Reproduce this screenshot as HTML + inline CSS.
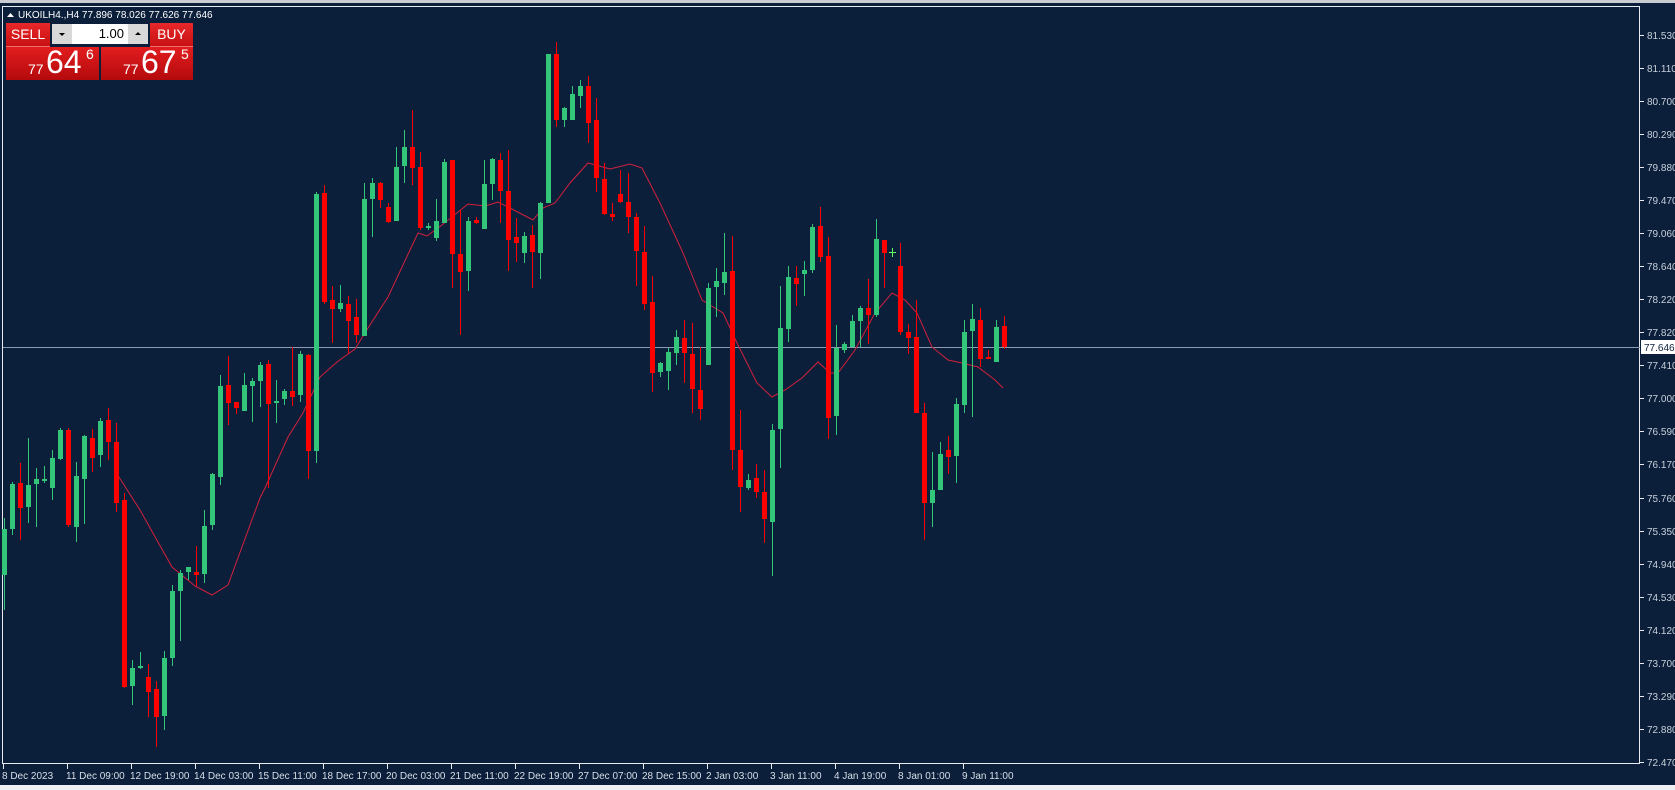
<!DOCTYPE html>
<html><head><meta charset="utf-8"><style>
html,body{margin:0;padding:0;width:1675px;height:790px;overflow:hidden;background:#0b1f3b;font-family:"Liberation Sans",sans-serif}
.abs{position:absolute}
.btn{position:absolute;color:#fff;font-size:14px;text-align:center;background:linear-gradient(#e8282a,#c81012);}
.pb{position:absolute;background:linear-gradient(#e21d1f,#b40a0c);color:#fff;}
</style></head><body>
<svg class="abs" style="left:0;top:0" width="1675" height="790" xmlns="http://www.w3.org/2000/svg">
<rect x="0" y="0" width="1675" height="790" fill="#0b1f3b"/>
<rect x="0" y="0" width="1675" height="3" fill="#c9ccd1"/>
<rect x="0" y="785" width="1675" height="5" fill="#eef0f3"/>
<rect x="2.5" y="6.5" width="1637" height="757" fill="none" stroke="#e8ecf0" stroke-width="1"/>
<line x1="3" y1="347.5" x2="1640" y2="347.5" stroke="#8d9bb0" stroke-width="1"/>
<polyline fill="none" stroke="#d2203c" stroke-width="1" points="117,474 140,510 172,567 195,586 212,595 228,585 260,498 265,488 288,437 303,413 320,377 337,362 355,349 368,328 388,297 418,233 427,236 442,225 468,204 485,206 498,202 510,208 533,220 543,208 555,203 570,183 588,163 610,169 630,164 642,168 660,203 683,253 702,300 710,305 723,313 737,343 757,383 772,397 785,390 802,378 818,362 830,373 838,373 855,350 875,313 892,293 905,300 917,313 932,347 948,360 962,363 978,367 995,380 1003,388"/>
<g fill="#c8d0da" font-size="10" font-family="Liberation Sans,sans-serif">
<text x="1647" y="39">81.530</text><text x="1647" y="72">81.110</text><text x="1647" y="105">80.700</text><text x="1647" y="138">80.290</text><text x="1647" y="171">79.880</text><text x="1647" y="204">79.470</text><text x="1647" y="237">79.060</text><text x="1647" y="270">78.640</text><text x="1647" y="303">78.220</text><text x="1647" y="336">77.820</text><text x="1647" y="369">77.410</text><text x="1647" y="402">77.000</text><text x="1647" y="435">76.590</text><text x="1647" y="468">76.170</text><text x="1647" y="502">75.760</text><text x="1647" y="535">75.350</text><text x="1647" y="568">74.940</text><text x="1647" y="601">74.530</text><text x="1647" y="634">74.120</text><text x="1647" y="667">73.700</text><text x="1647" y="700">73.290</text><text x="1647" y="733">72.880</text><text x="1647" y="766">72.470</text>
</g>
<g stroke="#e8ecf0" stroke-width="1">
<path d="M1640 35.5h4M1640 68.5h4M1640 101.5h4M1640 134.5h4M1640 167.5h4M1640 200.5h4M1640 233.5h4M1640 266.5h4M1640 299.5h4M1640 332.5h4M1640 365.5h4M1640 398.5h4M1640 431.5h4M1640 464.5h4M1640 498.5h4M1640 531.5h4M1640 564.5h4M1640 597.5h4M1640 630.5h4M1640 663.5h4M1640 696.5h4M1640 729.5h4M1640 762.5h4"/>
<path d="M3.5 764v5M67.5 764v5M131.5 764v5M195.5 764v5M259.5 764v5M323.5 764v5M387.5 764v5M451.5 764v5M515.5 764v5M579.5 764v5M643.5 764v5M707.5 764v5M771.5 764v5M835.5 764v5M899.5 764v5M963.5 764v5"/>
</g>
<rect x="1641" y="340" width="34" height="14" fill="#ffffff"/>
<text x="1644" y="351" font-size="10" fill="#0b1f3b" font-family="Liberation Sans,sans-serif">77.646</text>
<g fill="#d8dee6" font-size="10" font-family="Liberation Sans,sans-serif">
<text x="2" y="779">8 Dec 2023</text><text x="66" y="779">11 Dec 09:00</text><text x="130" y="779">12 Dec 19:00</text><text x="194" y="779">14 Dec 03:00</text><text x="258" y="779">15 Dec 11:00</text><text x="322" y="779">18 Dec 17:00</text><text x="386" y="779">20 Dec 03:00</text><text x="450" y="779">21 Dec 11:00</text><text x="514" y="779">22 Dec 19:00</text><text x="578" y="779">27 Dec 07:00</text><text x="642" y="779">28 Dec 15:00</text><text x="706" y="779">2 Jan 03:00</text><text x="770" y="779">3 Jan 11:00</text><text x="834" y="779">4 Jan 19:00</text><text x="898" y="779">8 Jan 01:00</text><text x="962" y="779">9 Jan 11:00</text>
</g>
<text x="18" y="18" font-size="10" fill="#ffffff" font-family="Liberation Sans,sans-serif">UKOILH4.,H4  77.896 78.026 77.626 77.646</text>
<path d="M7 17l3.5-4 3.5 4z" fill="#fff"/>
</svg>
<svg class="abs" style="left:0;top:0" width="1675" height="790" xmlns="http://www.w3.org/2000/svg">
<g fill="#33c57a">
<rect x="4" y="518" width="1" height="92"/><rect x="2" y="529" width="5" height="46"/>
<rect x="12" y="482" width="1" height="53"/><rect x="10" y="484" width="5" height="45"/>
<rect x="28" y="438" width="1" height="85"/><rect x="26" y="485" width="5" height="22"/>
<rect x="36" y="468" width="1" height="59"/><rect x="34" y="479" width="5" height="5"/>
<rect x="44" y="466" width="1" height="17"/><rect x="42" y="479" width="5" height="2"/>
<rect x="52" y="450" width="1" height="50"/><rect x="50" y="458" width="5" height="30"/>
<rect x="60" y="428" width="1" height="32"/><rect x="58" y="430" width="5" height="29"/>
<rect x="76" y="462" width="1" height="80"/><rect x="74" y="476" width="5" height="51"/>
<rect x="84" y="435" width="1" height="89"/><rect x="82" y="436" width="5" height="43"/>
<rect x="100" y="418" width="1" height="49"/><rect x="98" y="421" width="5" height="34"/>
<rect x="132" y="660" width="1" height="45"/><rect x="130" y="668" width="5" height="18"/>
<rect x="140" y="652" width="1" height="17"/><rect x="138" y="666" width="5" height="2"/>
<rect x="164" y="651" width="1" height="79"/><rect x="162" y="658" width="5" height="58"/>
<rect x="172" y="585" width="1" height="81"/><rect x="170" y="591" width="5" height="67"/>
<rect x="180" y="570" width="1" height="71"/><rect x="178" y="573" width="5" height="18"/>
<rect x="188" y="567" width="1" height="13"/><rect x="186" y="567" width="5" height="5"/>
<rect x="204" y="510" width="1" height="73"/><rect x="202" y="526" width="5" height="48"/>
<rect x="212" y="473" width="1" height="57"/><rect x="210" y="474" width="5" height="51"/>
<rect x="220" y="375" width="1" height="110"/><rect x="218" y="386" width="5" height="91"/>
<rect x="244" y="373" width="1" height="38"/><rect x="242" y="385" width="5" height="26"/>
<rect x="252" y="378" width="1" height="44"/><rect x="250" y="381" width="5" height="5"/>
<rect x="260" y="362" width="1" height="45"/><rect x="258" y="365" width="5" height="16"/>
<rect x="276" y="380" width="1" height="43"/><rect x="274" y="401" width="5" height="2"/>
<rect x="284" y="389" width="1" height="16"/><rect x="282" y="391" width="5" height="8"/>
<rect x="300" y="351" width="1" height="51"/><rect x="298" y="354" width="5" height="41"/>
<rect x="316" y="192" width="1" height="271"/><rect x="314" y="194" width="5" height="257"/>
<rect x="340" y="285" width="1" height="27"/><rect x="338" y="303" width="5" height="6"/>
<rect x="364" y="183" width="1" height="153"/><rect x="362" y="199" width="5" height="137"/>
<rect x="372" y="178" width="1" height="59"/><rect x="370" y="183" width="5" height="16"/>
<rect x="396" y="147" width="1" height="74"/><rect x="394" y="167" width="5" height="54"/>
<rect x="404" y="130" width="1" height="53"/><rect x="402" y="147" width="5" height="19"/>
<rect x="428" y="223" width="1" height="7"/><rect x="426" y="226" width="5" height="2"/>
<rect x="436" y="199" width="1" height="42"/><rect x="434" y="221" width="5" height="17"/>
<rect x="444" y="159" width="1" height="64"/><rect x="442" y="162" width="5" height="61"/>
<rect x="468" y="217" width="1" height="74"/><rect x="466" y="221" width="5" height="50"/>
<rect x="484" y="160" width="1" height="69"/><rect x="482" y="184" width="5" height="45"/>
<rect x="492" y="158" width="1" height="42"/><rect x="490" y="159" width="5" height="25"/>
<rect x="524" y="232" width="1" height="31"/><rect x="522" y="236" width="5" height="17"/>
<rect x="540" y="202" width="1" height="77"/><rect x="538" y="203" width="5" height="50"/>
<rect x="548" y="54" width="1" height="149"/><rect x="546" y="54" width="5" height="149"/>
<rect x="564" y="107" width="1" height="20"/><rect x="562" y="108" width="5" height="12"/>
<rect x="572" y="86" width="1" height="34"/><rect x="570" y="94" width="5" height="26"/>
<rect x="580" y="80" width="1" height="28"/><rect x="578" y="86" width="5" height="10"/>
<rect x="660" y="362" width="1" height="15"/><rect x="658" y="363" width="5" height="9"/>
<rect x="668" y="348" width="1" height="42"/><rect x="666" y="352" width="5" height="19"/>
<rect x="676" y="330" width="1" height="35"/><rect x="674" y="337" width="5" height="16"/>
<rect x="708" y="283" width="1" height="82"/><rect x="706" y="288" width="5" height="77"/>
<rect x="716" y="268" width="1" height="49"/><rect x="714" y="281" width="5" height="6"/>
<rect x="724" y="233" width="1" height="62"/><rect x="722" y="272" width="5" height="11"/>
<rect x="748" y="474" width="1" height="16"/><rect x="746" y="480" width="5" height="8"/>
<rect x="772" y="424" width="1" height="152"/><rect x="770" y="430" width="5" height="92"/>
<rect x="780" y="286" width="1" height="182"/><rect x="778" y="328" width="5" height="101"/>
<rect x="788" y="266" width="1" height="76"/><rect x="786" y="277" width="5" height="52"/>
<rect x="804" y="261" width="1" height="35"/><rect x="802" y="270" width="5" height="4"/>
<rect x="812" y="224" width="1" height="49"/><rect x="810" y="227" width="5" height="43"/>
<rect x="836" y="325" width="1" height="110"/><rect x="834" y="348" width="5" height="68"/>
<rect x="844" y="342" width="1" height="11"/><rect x="842" y="344" width="5" height="6"/>
<rect x="852" y="315" width="1" height="32"/><rect x="850" y="321" width="5" height="26"/>
<rect x="860" y="306" width="1" height="41"/><rect x="858" y="308" width="5" height="13"/>
<rect x="876" y="219" width="1" height="98"/><rect x="874" y="239" width="5" height="76"/>
<rect x="932" y="452" width="1" height="75"/><rect x="930" y="490" width="5" height="13"/>
<rect x="940" y="442" width="1" height="48"/><rect x="938" y="454" width="5" height="36"/>
<rect x="956" y="398" width="1" height="85"/><rect x="954" y="404" width="5" height="52"/>
<rect x="964" y="320" width="1" height="93"/><rect x="962" y="332" width="5" height="73"/>
<rect x="972" y="304" width="1" height="113"/><rect x="970" y="319" width="5" height="12"/>
<rect x="996" y="320" width="1" height="42"/><rect x="994" y="327" width="5" height="35"/>
</g>
<g fill="#5cff5c"><rect x="892" y="248" width="1" height="9"/><rect x="889" y="252" width="7" height="1"/></g>
<g fill="#ff0000">
<rect x="20" y="463" width="1" height="77"/><rect x="18" y="483" width="5" height="25"/>
<rect x="68" y="428" width="1" height="99"/><rect x="66" y="430" width="5" height="95"/>
<rect x="92" y="429" width="1" height="43"/><rect x="90" y="438" width="5" height="20"/>
<rect x="108" y="408" width="1" height="52"/><rect x="106" y="420" width="5" height="22"/>
<rect x="116" y="423" width="1" height="89"/><rect x="114" y="442" width="5" height="61"/>
<rect x="124" y="493" width="1" height="195"/><rect x="122" y="500" width="5" height="187"/>
<rect x="148" y="664" width="1" height="53"/><rect x="146" y="677" width="5" height="15"/>
<rect x="156" y="681" width="1" height="66"/><rect x="154" y="689" width="5" height="28"/>
<rect x="196" y="546" width="1" height="40"/><rect x="194" y="572" width="5" height="3"/>
<rect x="228" y="356" width="1" height="69"/><rect x="226" y="385" width="5" height="18"/>
<rect x="236" y="402" width="1" height="12"/><rect x="234" y="402" width="5" height="6"/>
<rect x="268" y="360" width="1" height="128"/><rect x="266" y="364" width="5" height="40"/>
<rect x="292" y="347" width="1" height="59"/><rect x="290" y="391" width="5" height="6"/>
<rect x="308" y="354" width="1" height="125"/><rect x="306" y="355" width="5" height="96"/>
<rect x="324" y="185" width="1" height="119"/><rect x="322" y="193" width="5" height="109"/>
<rect x="332" y="286" width="1" height="57"/><rect x="330" y="300" width="5" height="9"/>
<rect x="348" y="296" width="1" height="57"/><rect x="346" y="304" width="5" height="17"/>
<rect x="356" y="299" width="1" height="44"/><rect x="354" y="317" width="5" height="18"/>
<rect x="380" y="182" width="1" height="26"/><rect x="378" y="183" width="5" height="17"/>
<rect x="388" y="203" width="1" height="20"/><rect x="386" y="207" width="5" height="15"/>
<rect x="412" y="110" width="1" height="75"/><rect x="410" y="147" width="5" height="21"/>
<rect x="420" y="152" width="1" height="78"/><rect x="418" y="167" width="5" height="61"/>
<rect x="452" y="160" width="1" height="128"/><rect x="450" y="160" width="5" height="94"/>
<rect x="460" y="210" width="1" height="125"/><rect x="458" y="254" width="5" height="18"/>
<rect x="476" y="217" width="1" height="7"/><rect x="474" y="220" width="5" height="3"/>
<rect x="500" y="153" width="1" height="70"/><rect x="498" y="160" width="5" height="31"/>
<rect x="508" y="150" width="1" height="121"/><rect x="506" y="191" width="5" height="49"/>
<rect x="516" y="218" width="1" height="44"/><rect x="514" y="237" width="5" height="6"/>
<rect x="532" y="225" width="1" height="63"/><rect x="530" y="235" width="5" height="17"/>
<rect x="556" y="42" width="1" height="85"/><rect x="554" y="54" width="5" height="66"/>
<rect x="588" y="76" width="1" height="67"/><rect x="586" y="86" width="5" height="37"/>
<rect x="596" y="98" width="1" height="94"/><rect x="594" y="120" width="5" height="58"/>
<rect x="604" y="163" width="1" height="52"/><rect x="602" y="179" width="5" height="35"/>
<rect x="612" y="203" width="1" height="18"/><rect x="610" y="214" width="5" height="3"/>
<rect x="620" y="170" width="1" height="33"/><rect x="618" y="194" width="5" height="8"/>
<rect x="628" y="173" width="1" height="60"/><rect x="626" y="202" width="5" height="15"/>
<rect x="636" y="213" width="1" height="73"/><rect x="634" y="217" width="5" height="34"/>
<rect x="644" y="226" width="1" height="84"/><rect x="642" y="252" width="5" height="52"/>
<rect x="652" y="276" width="1" height="116"/><rect x="650" y="302" width="5" height="71"/>
<rect x="684" y="320" width="1" height="63"/><rect x="682" y="338" width="5" height="15"/>
<rect x="692" y="323" width="1" height="90"/><rect x="690" y="354" width="5" height="35"/>
<rect x="700" y="347" width="1" height="73"/><rect x="698" y="390" width="5" height="19"/>
<rect x="732" y="236" width="1" height="234"/><rect x="730" y="271" width="5" height="179"/>
<rect x="740" y="410" width="1" height="102"/><rect x="738" y="450" width="5" height="37"/>
<rect x="756" y="464" width="1" height="34"/><rect x="754" y="478" width="5" height="14"/>
<rect x="764" y="470" width="1" height="73"/><rect x="762" y="492" width="5" height="27"/>
<rect x="796" y="266" width="1" height="40"/><rect x="794" y="278" width="5" height="6"/>
<rect x="820" y="207" width="1" height="55"/><rect x="818" y="226" width="5" height="31"/>
<rect x="828" y="237" width="1" height="202"/><rect x="826" y="256" width="5" height="162"/>
<rect x="868" y="279" width="1" height="65"/><rect x="866" y="308" width="5" height="7"/>
<rect x="884" y="240" width="1" height="48"/><rect x="882" y="240" width="5" height="13"/>
<rect x="900" y="243" width="1" height="92"/><rect x="898" y="266" width="5" height="66"/>
<rect x="908" y="324" width="1" height="30"/><rect x="906" y="332" width="5" height="6"/>
<rect x="916" y="300" width="1" height="113"/><rect x="914" y="337" width="5" height="76"/>
<rect x="924" y="403" width="1" height="137"/><rect x="922" y="413" width="5" height="90"/>
<rect x="948" y="436" width="1" height="38"/><rect x="946" y="450" width="5" height="7"/>
<rect x="980" y="308" width="1" height="59"/><rect x="978" y="320" width="5" height="39"/>
<rect x="988" y="350" width="1" height="9"/><rect x="986" y="357" width="5" height="2"/>
<rect x="1004" y="316" width="1" height="33"/><rect x="1002" y="326" width="5" height="21"/>
</g>
</svg>
<div class="abs" style="left:5px;top:22px;width:189px;height:59px;background:#0b1f3b"></div>
<div class="btn" style="left:6px;top:23px;width:44px;height:23px;line-height:22px;border-bottom:1px solid #f07070">SELL</div>
<div class="abs" style="left:52px;top:24px;width:20px;height:20px;background:#d9d9d9;"><div style="position:absolute;left:7px;top:9px;width:0;height:0;border-left:3px solid transparent;border-right:3px solid transparent;border-top:3px solid #000"></div></div>
<div class="abs" style="left:72px;top:24px;width:56px;height:20px;background:#fff;font-size:13px;line-height:20px;text-align:right;box-sizing:border-box;padding-right:4px;color:#000">1.00</div>
<div class="abs" style="left:128px;top:24px;width:20px;height:20px;background:#d9d9d9;"><div style="position:absolute;left:7px;top:8px;width:0;height:0;border-left:3px solid transparent;border-right:3px solid transparent;border-bottom:3px solid #000"></div></div>
<div class="btn" style="left:150px;top:23px;width:43px;height:23px;line-height:22px;border-bottom:1px solid #f07070">BUY</div>
<div class="pb" style="left:6px;top:47px;width:93px;height:33px">
<span class="abs" style="left:22px;top:14px;font-size:14px">77</span>
<span class="abs" style="left:40px;top:-3px;font-size:32px">64</span>
<span class="abs" style="left:80px;top:-1px;font-size:14px">6</span>
</div>
<div class="pb" style="left:101px;top:47px;width:92px;height:33px">
<span class="abs" style="left:22px;top:14px;font-size:14px">77</span>
<span class="abs" style="left:40px;top:-3px;font-size:32px">67</span>
<span class="abs" style="left:80px;top:-1px;font-size:14px">5</span>
</div>
</body></html>
